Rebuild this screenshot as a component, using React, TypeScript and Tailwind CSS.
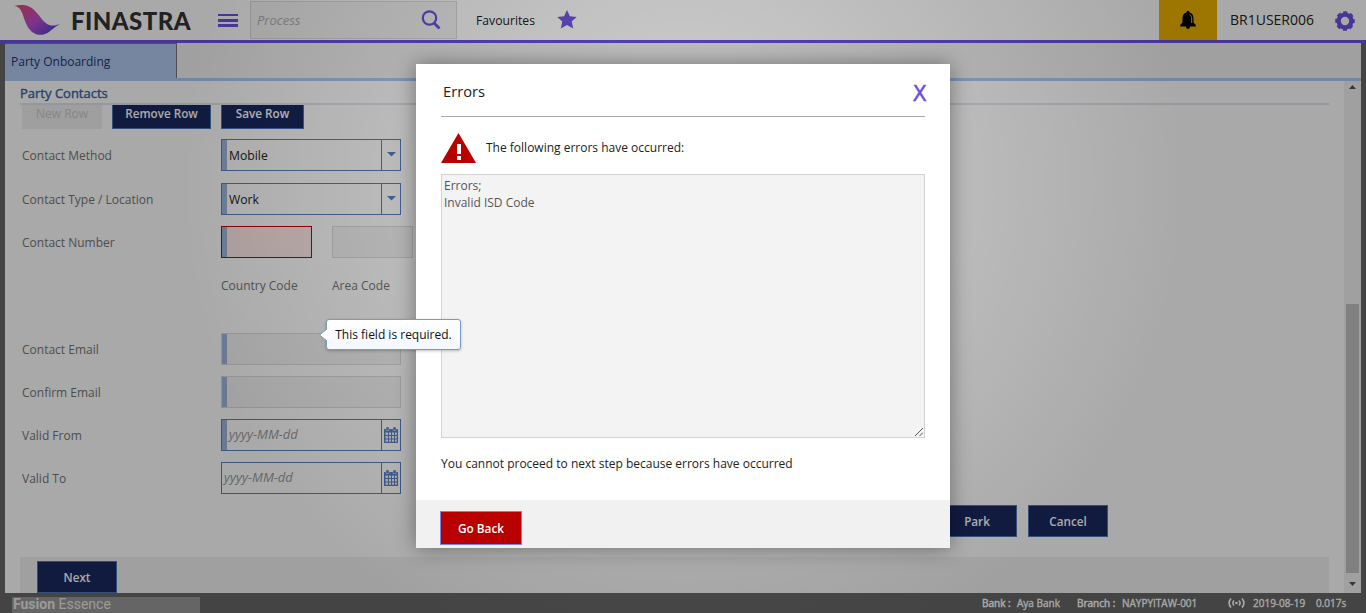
import React from "react";

function Logo() {
  return (
    <svg className="ml-[14px] mt-[4px] h-[32px] w-[48px] shrink-0" viewBox="0 0 48 32">
      <defs>
        <linearGradient id="swoosh" x1="0" y1="0" x2="1" y2="1">
          <stop offset="0" stopColor="#e8486a" />
          <stop offset="0.5" stopColor="#c04ed0" />
          <stop offset="0.8" stopColor="#6a44cc" />
          <stop offset="1" stopColor="#3a6fd8" />
        </linearGradient>
      </defs>
      <path
        d="M0 2 C8 0 16 1 21 7 C27 13 30 20 37 21.500 C41 22 44 20.500 48 19.500 C42 21.500 39 25 35 28 C30 31.500 24 32 18 28 C11 22 10 12 7 6.500 C5 3.500 3 2.200 0 2Z"
        fill="url(#swoosh)"
      />
    </svg>
  );
}

function Header() {
  return (
    <header className="flex h-[43px] shrink-0 border-b-[3px] border-[#6c50e0] bg-white">
      <Logo />
      <div className="ml-[9px] w-[147px] font-['Lato'] text-[24px] font-black leading-[42px] tracking-[0.45px] text-[#333]">
        FINASTRA
      </div>
      <div className="mt-[14px] flex w-[20px] flex-col">
        <span className="h-[2px] bg-[#6c50e0]" />
        <span className="mt-[3px] h-[3px] bg-[#6c50e0]" />
        <span className="mt-[2px] h-[3px] bg-[#6c50e0]" />
      </div>
      <div className="ml-[12px] mt-px flex h-[38px] w-[207px] items-center justify-between border border-[#dadada] bg-[#f4f4f4] pl-[6px] pr-[15px]">
        <span className="pt-px text-[13px] italic text-[#b0b0b0]">Process</span>
        <svg className="h-[20px] w-[20px]" viewBox="0 0 20 20" fill="none" stroke="#6c50e0">
          <circle cx="8.500" cy="8" r="6.700" strokeWidth="2.200" />
          <path d="M13 13 L18.500 18.500" strokeWidth="2.800" />
        </svg>
      </div>
      <div className="ml-[19px] w-[81px] text-[12.200px] leading-[41px] text-[#222]">Favourites</div>
      <svg className="mt-[10px] h-[19px] w-[20px]" viewBox="0 0 20 19">
        <path d="M10 0 L12.900 6.200 L19.700 7 L14.700 11.600 L16.200 18.500 L10 15 L3.800 18.500 L5.300 11.600 L0.300 7 L7.100 6.200Z" fill="#7357e0" />
      </svg>
      <div className="ml-auto flex w-[58px] items-center justify-center bg-[#ecb100]">
        <svg className="h-[18px] w-[16px]" viewBox="0 0 16 18">
          <path d="M8 0 C9 0 9.600 0.700 9.500 1.600 C12.200 2.300 13.500 4.500 13.500 7.500 V11.500 L15.800 14 V15.500 H0.200 V14 L2.500 11.500 V7.500 C2.500 4.500 3.800 2.300 6.500 1.600 C6.400 0.700 7 0 8 0Z M6 15.500 H10 C10 17 9.200 17.800 8 17.800 C6.800 17.800 6 17 6 15.500Z" fill="#000" />
          <path d="M9.500 3.500 C11.200 4.500 11.700 6 11.700 8 V12" fill="none" stroke="#ecb100" strokeWidth="1" />
        </svg>
      </div>
      <div className="w-[118px] pl-[13px] text-[14px] leading-[40px] text-[#222]">BR1USER006</div>
      <svg className="mr-[11px] mt-[11px] h-[20px] w-[20px] shrink-0" viewBox="0 0 20 20">
        <circle cx="10" cy="10" r="6.400" fill="none" stroke="#6c50e0" strokeWidth="4.400" />
        <circle cx="10" cy="10" r="8.600" fill="none" stroke="#6c50e0" strokeWidth="2.400" strokeDasharray="4.100 2.654" strokeDashoffset="2.050" />
      </svg>
    </header>
  );
}

const navy =
  "flex h-[32px] shrink-0 items-center justify-center border border-[#4c77b8] bg-[#19285f] pt-[2px] text-[11.700px] font-semibold text-white";

function Label({ children }: { children: React.ReactNode }) {
  return <div className="w-[199px] shrink-0 text-[12px] leading-[33px] text-[#757575]">{children}</div>;
}

function SelectBox({ value }: { value: string }) {
  return (
    <div className="flex h-[32px] w-[180px] border border-[#5680c6] text-[12.200px] leading-[32px] text-[#222]">
      <span className="w-[5px] bg-[#9fb6da]" />
      <span className="flex-1 pl-[2px]">{value}</span>
      <span className="flex w-[19px] justify-center border-l border-[#5680c6] pt-[12px]">
        <svg className="h-[5px] w-[9px]" viewBox="0 0 9 5">
          <path d="M0 0 H9 L4.500 4.500Z" fill="#5680c6" />
        </svg>
      </span>
    </div>
  );
}

function CalendarIcon() {
  return (
    <svg className="h-[17px] w-[14px]" viewBox="0 0 14 17">
      <path d="M0 2 H14 V16 H0Z" fill="#5680c6" />
      <path d="M2 0 H5 V3.500 H2Z M9 0 H12 V3.500 H9Z" fill="#5680c6" stroke="#f4f4f4" strokeWidth="0.500" />
      <path
        d="M1.500 5.500 H4 V8 H1.500Z M5 5.500 H7 V8 H5Z M8 5.500 H10 V8 H8Z M11 5.500 H12.800 V8 H11Z M1.500 9 H4 V11.500 H1.500Z M5 9 H7 V11.500 H5Z M8 9 H10 V11.500 H8Z M11 9 H12.800 V11.500 H11Z M1.500 12.500 H4 V14.800 H1.500Z M5 12.500 H7 V14.800 H5Z M8 12.500 H10 V14.800 H8Z M11 12.500 H12.800 V14.800 H11Z"
        fill="#f4f4f4"
      />
    </svg>
  );
}

function DateBox({ required }: { required?: boolean }) {
  return (
    <div className="flex h-[32px] w-[180px] border border-[#5680c6] text-[13px] italic leading-[29px] text-[#999]">
      {required && <span className="w-[5px] bg-[#9fb6da]" />}
      <span className="flex-1 pl-[2px]">yyyy-MM-dd</span>
      <span className="flex w-[19px] items-center justify-center border-l border-[#5680c6]">
        <CalendarIcon />
      </span>
    </div>
  );
}

function DisabledBox() {
  return (
    <div className="flex h-[32px] w-[180px] border border-[#dcdcdc] bg-[#f4f4f4]">
      <span className="w-[5px] bg-[#9fb6da]" />
    </div>
  );
}

function Form() {
  return (
    <main className="flex min-w-0 flex-1 flex-col pl-[15px] pr-[15px]">
      <h2 className="h-[24px] shrink-0 border-b-2 border-[#dfe6ee] text-[13px] leading-[25px] text-[#3c649f] [-webkit-text-stroke:0.4px_#3c649f]">Party Contacts</h2>
      <div className="flex h-[24px] shrink-0 items-end overflow-hidden pl-[2px]">
        <div className="flex h-[32px] w-[80px] items-center justify-center bg-[#efefef] pt-px text-[12px] text-[#cacaca]">New Row</div>
        <div className={navy + " ml-[10px] w-[99px]"}>Remove Row</div>
        <div className={navy + " ml-[10px] w-[83px]"}>Save Row</div>
      </div>
      <div className="mt-[10px] flex h-[44px] shrink-0 pl-[2px]">
        <Label>Contact Method</Label>
        <SelectBox value="Mobile" />
      </div>
      <div className="flex h-[43px] shrink-0 pl-[2px]">
        <Label>Contact Type / Location</Label>
        <SelectBox value="Work" />
      </div>
      <div className="flex h-[43px] shrink-0 pl-[2px]">
        <Label>Contact Number</Label>
        <div className="flex h-[32px] w-[91px] border border-[#c80000] bg-[#ffe9e9]">
          <span className="w-[5px] bg-[#9fb6da]" />
        </div>
        <div className="ml-[20px] h-[32px] w-[81px] border border-[#dcdcdc] bg-[#f4f4f4]" />
      </div>
      <div className="flex h-[64px] shrink-0 pl-[201px] text-[12px] leading-[33px] text-[#757575]">
        <span className="w-[111px]">Country Code</span>
        <span>Area Code</span>
      </div>
      <div className="flex h-[43px] shrink-0 pl-[2px]">
        <Label>Contact Email</Label>
        <DisabledBox />
      </div>
      <div className="flex h-[43px] shrink-0 pl-[2px]">
        <Label>Confirm Email</Label>
        <DisabledBox />
      </div>
      <div className="flex h-[43px] shrink-0 pl-[2px]">
        <Label>Valid From</Label>
        <DateBox required />
      </div>
      <div className="flex h-[43px] shrink-0 pl-[2px]">
        <Label>Valid To</Label>
        <DateBox />
      </div>
      <div className="flex h-[52px] shrink-0 justify-end gap-[11px] pr-[221px]">
        <div className={navy + " w-[80px]"}>Park</div>
        <div className={navy + " w-[80px]"}>Cancel</div>
      </div>
      <div className="flex h-[36px] shrink-0 items-end bg-[#f2f2f2] pl-[17px]">
        <div className={navy + " w-[80px]"}>Next</div>
      </div>
    </main>
  );
}

function ScrollBar() {
  return (
    <div className="flex w-[17px] shrink-0 flex-col items-center bg-[#f1f1f1]">
      <svg className="mt-[4px] h-[4px] w-[7px]" viewBox="0 0 7 4"><path d="M0 4 L3.500 0 L7 4Z" fill="#505050" /></svg>
      <div className="mt-[215px] h-[269px] w-[13px] bg-[#c1c1c1]" />
      <svg className="mt-[9px] h-[4px] w-[7px]" viewBox="0 0 7 4"><path d="M0 0 H7 L3.500 4Z" fill="#505050" /></svg>
    </div>
  );
}

function Footer() {
  return (
    <footer className="flex h-[20px] shrink-0 items-center bg-[#666] text-[10px] text-white">
      <div className="ml-[12px] mt-[4px] h-[16px] w-[188px] bg-[#989898] pl-px font-['Roboto'] text-[14px] leading-[15px] text-[#e8e8e8]">
        <b>Fusion</b> Essence
      </div>
      <span className="ml-auto w-[35px] [-webkit-text-stroke:0.45px_#fff]">Bank :</span>
      <span className="w-[60px] [-webkit-text-stroke:0.3px_#fff]">Aya Bank</span>
      <span className="w-[45px] [-webkit-text-stroke:0.45px_#fff]">Branch :</span>
      <span className="w-[106px] [-webkit-text-stroke:0.3px_#fff]">NAYPYITAW-001</span>
      <svg className="h-[10px] w-[17px]" viewBox="0 0 17 10" fill="none" stroke="#fff" strokeWidth="1.600">
        <path d="M3 0.500 Q-0.800 5 3 9.500 M6 2.500 Q3.800 5 6 7.500 M11 2.500 Q13.200 5 11 7.500 M14 0.500 Q17.800 5 14 9.500" />
        <circle cx="8.500" cy="5" r="1.300" fill="#fff" stroke="none" />
      </svg>
      <span className="ml-[8px] w-[63px] [-webkit-text-stroke:0.3px_#fff]">2019-08-19</span>
      <span className="w-[50px] [-webkit-text-stroke:0.3px_#fff]">0.017s</span>
    </footer>
  );
}

function ErrorDialog() {
  return (
    <section className="absolute left-[416px] top-[64px] flex h-[484px] w-[534px] flex-col bg-white text-[12px] text-[#222] shadow-[0_0_20px_rgba(0,0,0,0.4)]">
      <div className="mx-[25px] flex h-[53px] shrink-0 justify-between border-b border-[#aaa] pl-[2px]">
        <h1 className="text-[14.700px] leading-[55px] text-[#222]">Errors</h1>
        <span className="-mr-[2px] pt-[2px] font-['DejaVu_Sans'] text-[21px] leading-[57px] text-[#694ed6] [-webkit-text-stroke:0.4px_#694ed6]">X</span>
      </div>
      <div className="mx-[25px] mt-[16px] flex h-[41px] shrink-0">
        <svg className="h-[30px] w-[35px]" viewBox="0 0 35 30">
          <path d="M17.500 0 L35 30 H0Z" fill="#b80000" />
          <path d="M16 11 H20 V21 H16Z M16 23 H20 V27 H16Z" fill="#fff" />
        </svg>
        <p className="ml-[10px] leading-[29px]">The following errors have occurred:</p>
      </div>
      <div className="relative mx-[25px] h-[264px] shrink-0 whitespace-pre-line border border-[#d3d3d3] bg-[#f3f3f3] px-[2px] pt-[2px] leading-[17px] text-[#555]">
        {"Errors;\nInvalid ISD Code"}
        <svg className="absolute bottom-px right-px h-[8px] w-[8px]" viewBox="0 0 8 8" stroke="#555" strokeWidth="1">
          <path d="M0 8 L8 0 M4.500 8 L8 4.500" />
        </svg>
      </div>
      <p className="mx-[25px] mt-[17px] leading-[17px]">You cannot proceed to next step because errors have occurred</p>
      <div className="mt-auto h-[48px] bg-[#f1f1f1] pl-[25px] pt-[12px]">
        <button className="block h-[32px] w-[80px] bg-[#b80000] pt-[2px] text-[11.800px] font-semibold text-white outline outline-1 outline-[#7b83e0]">Go Back</button>
      </div>
    </section>
  );
}

function Tooltip() {
  return (
    <div className="absolute left-[326px] top-[319px] flex h-[31px] w-[135px] items-center justify-center rounded-[3px] border border-[#769dc0] bg-linear-to-b from-white to-[#f3f8ff] pt-px text-[12px] text-[#111] shadow-[0_1px_3px_rgba(0,0,0,0.25)]">
      This field is required.
      <svg className="absolute -left-[8px] top-[9px] h-[12px] w-[8px]" viewBox="0 0 8 12">
        <path d="M8 0 L0.500 6 L8 12" fill="#fff" stroke="#769dc0" />
      </svg>
    </div>
  );
}

export default function App() {
  return (
    <div className="relative flex h-[613px] w-[1366px] flex-col overflow-hidden bg-white font-['Open_Sans',sans-serif]">
      <Header />
      <div className="flex h-[550px] shrink-0 flex-col border-x-[5px] border-[#666] bg-white">
        <div className="flex h-[38px] shrink-0 border-b-[3px] border-[#b0c9f0] bg-[#f2f2f2]">
          <div className="h-[35px] w-[172px] border-r border-t border-[#777] bg-[#b0c9f0] pl-[6px] text-[12px] leading-[36px] text-[#20336e]">
            Party Onboarding
          </div>
        </div>
        <div className="flex min-h-0 flex-1">
          <Form />
          <ScrollBar />
        </div>
      </div>
      <Footer />
      <div className="absolute inset-0 bg-[radial-gradient(circle_at_683px_185px,rgba(0,0,0,0.175),rgba(0,0,0,0.337)_500px)]" />
      <ErrorDialog />
      <Tooltip />
    </div>
  );
}
